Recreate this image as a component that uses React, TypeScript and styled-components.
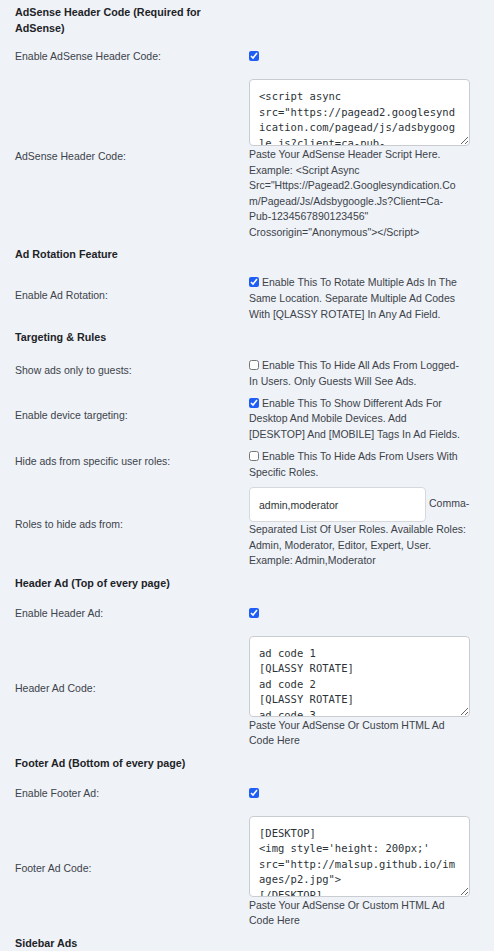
import React from "react";
import styled, { createGlobalStyle } from "styled-components";

const Global = createGlobalStyle`
  html, body { margin: 0; padding: 0; background: #eff2f7; }
  body { font-family: "Liberation Sans", Arial, sans-serif; }
`;

const Page = styled.div`
  box-sizing: border-box;
  width: 494px;
  padding: 1px 0 0 15px;
  color: #3c434a;
  font-size: 10.5px;
  line-height: 15.5px;
`;

const Heading = styled.h3<{ $tight?: boolean }>`
  margin: 3px 0 ${(p) => (p.$tight ? 8 : 10)}px;
  max-width: 210px;
  font-size: 10.75px;
  line-height: 16px;
  font-weight: 700;
  color: #1d2327;
`;

const Row = styled.div`
  display: flex;
  align-items: center;
  padding: 3px 0;
`;

const Label = styled.div`
  flex: 0 0 234px;
  line-height: 16px;
  padding-bottom: 8px;
`;

const Field = styled.div<{ $checkOnly?: boolean }>`
  width: 224px;
  ${(p) => (p.$checkOnly ? "height: 26px; padding-top: 4px; box-sizing: border-box;" : "")}
`;

const Check = styled.input.attrs({ type: "checkbox" })<{ $inline?: boolean }>`
  width: 10px;
  height: 10px;
  margin: ${(p) => (p.$inline ? "0 3px 0 0" : "0")};
  vertical-align: ${(p) => (p.$inline ? "-1px" : "top")};
  accent-color: #1f5ef5;
  display: ${(p) => (p.$inline ? "inline-block" : "block")};
`;

const CheckText = styled.div`
  line-height: 15.9px;
`;

const Code = styled.textarea<{ $h: number }>`
  display: block;
  box-sizing: border-box;
  width: 221px;
  height: ${(p) => p.$h}px;
  margin: 0 0 1px;
  padding: 9px;
  border: 1px solid #c9ccd1;
  border-radius: 4px;
  background: #fff;
  color: #2c3338;
  font-family: "DejaVu Sans Mono", monospace;
  font-size: 10.5px;
  line-height: 15.5px;
  overflow: hidden;
  outline: none;
`;

const Desc = styled.p`
  margin: 0;
  line-height: 15.5px;
`;

const TextInput = styled.input`
  box-sizing: border-box;
  width: 177px;
  height: 35px;
  margin: 0 3px 0 0;
  padding: 0 9px;
  border: 1px solid #d6d8dc;
  border-radius: 4px;
  background: #fff;
  color: #2c3338;
  font-family: "Liberation Sans", Arial, sans-serif;
  font-size: 10.5px;
  vertical-align: middle;
  outline: none;
`;

const Lines: React.FC<{ lines: string[] }> = ({ lines }) => (
  <>
    {lines.map((l, i) => (
      <React.Fragment key={i}>
        {i > 0 && <br />}
        {l}
      </React.Fragment>
    ))}
  </>
);

const CheckRow: React.FC<{ label: string; checked: boolean; lines: string[] }> = ({
  label,
  checked,
  lines,
}) => (
  <Row>
    <Label>{label}</Label>
    <Field>
      <CheckText>
        <Check $inline defaultChecked={checked} />
        <Lines lines={lines} />
      </CheckText>
    </Field>
  </Row>
);

const ToggleRow: React.FC<{ label: string }> = ({ label }) => (
  <Row>
    <Label>{label}</Label>
    <Field $checkOnly>
      <Check defaultChecked />
    </Field>
  </Row>
);

const CodeRow: React.FC<{ label: string; value: string; h: number; lines: string[] }> = ({
  label,
  value,
  h,
  lines,
}) => (
  <Row>
    <Label>{label}</Label>
    <Field>
      <Code $h={h} defaultValue={value} spellCheck={false} />
      <Desc>
        <Lines lines={lines} />
      </Desc>
    </Field>
  </Row>
);

const adsenseCode =
  '<script async src="https://pagead2.googlesyndication.com/pagead/js/adsbygoogle.js?client=ca-pub-1234567890123456" crossorigin="anonymous"></script>';

const headerCode = "ad code 1\n[QLASSY ROTATE]\nad code 2\n[QLASSY ROTATE]\nad code 3";

const footerCode =
  "[DESKTOP]\n<img style='height: 200px;' src=\"http://malsup.github.io/images/p2.jpg\">\n[/DESKTOP]\n[MOBILE]\n<img style='height: 100px;' src=\"http://malsup.github.io/images/p3.jpg\">\n[/MOBILE]";

export default function App() {
  return (
    <>
      <Global />
      <Page>
        <Heading $tight>AdSense Header Code (Required for AdSense)</Heading>
        <ToggleRow label="Enable AdSense Header Code:" />
        <CodeRow
          label="AdSense Header Code:"
          value={adsenseCode}
          h={67}
          lines={[
            "Paste Your AdSense Header Script Here.",
            "Example: <Script Async",
            'Src="Https://Pagead2.Googlesyndication.Co',
            "m/Pagead/Js/Adsbygoogle.Js?Client=Ca-",
            'Pub-1234567890123456"',
            'Crossorigin="Anonymous"></Script>',
          ]}
        />

        <Heading>Ad Rotation Feature</Heading>
        <CheckRow
          label="Enable Ad Rotation:"
          checked
          lines={[
            "Enable This To Rotate Multiple Ads In The",
            "Same Location. Separate Multiple Ad Codes",
            "With [QLASSY ROTATE] In Any Ad Field.",
          ]}
        />

        <Heading>Targeting &amp; Rules</Heading>
        <CheckRow
          label="Show ads only to guests:"
          checked={false}
          lines={["Enable This To Hide All Ads From Logged-", "In Users. Only Guests Will See Ads."]}
        />
        <CheckRow
          label="Enable device targeting:"
          checked
          lines={[
            "Enable This To Show Different Ads For",
            "Desktop And Mobile Devices. Add",
            "[DESKTOP] And [MOBILE] Tags In Ad Fields.",
          ]}
        />
        <CheckRow
          label="Hide ads from specific user roles:"
          checked={false}
          lines={["Enable This To Hide Ads From Users With", "Specific Roles."]}
        />
        <Row>
          <Label>Roles to hide ads from:</Label>
          <Field>
            <Desc>
              <TextInput defaultValue="admin,moderator" />
              <Lines
                lines={[
                  "Comma-",
                  "Separated List Of User Roles. Available Roles:",
                  "Admin, Moderator, Editor, Expert, User.",
                  "Example: Admin,Moderator",
                ]}
              />
            </Desc>
          </Field>
        </Row>

        <Heading>Header Ad (Top of every page)</Heading>
        <ToggleRow label="Enable Header Ad:" />
        <CodeRow
          label="Header Ad Code:"
          value={headerCode}
          h={81}
          lines={["Paste Your AdSense Or Custom HTML Ad", "Code Here"]}
        />

        <Heading>Footer Ad (Bottom of every page)</Heading>
        <ToggleRow label="Enable Footer Ad:" />
        <CodeRow
          label="Footer Ad Code:"
          value={footerCode}
          h={81}
          lines={["Paste Your AdSense Or Custom HTML Ad", "Code Here"]}
        />

        <Heading>Sidebar Ads</Heading>
      </Page>
    </>
  );
}
